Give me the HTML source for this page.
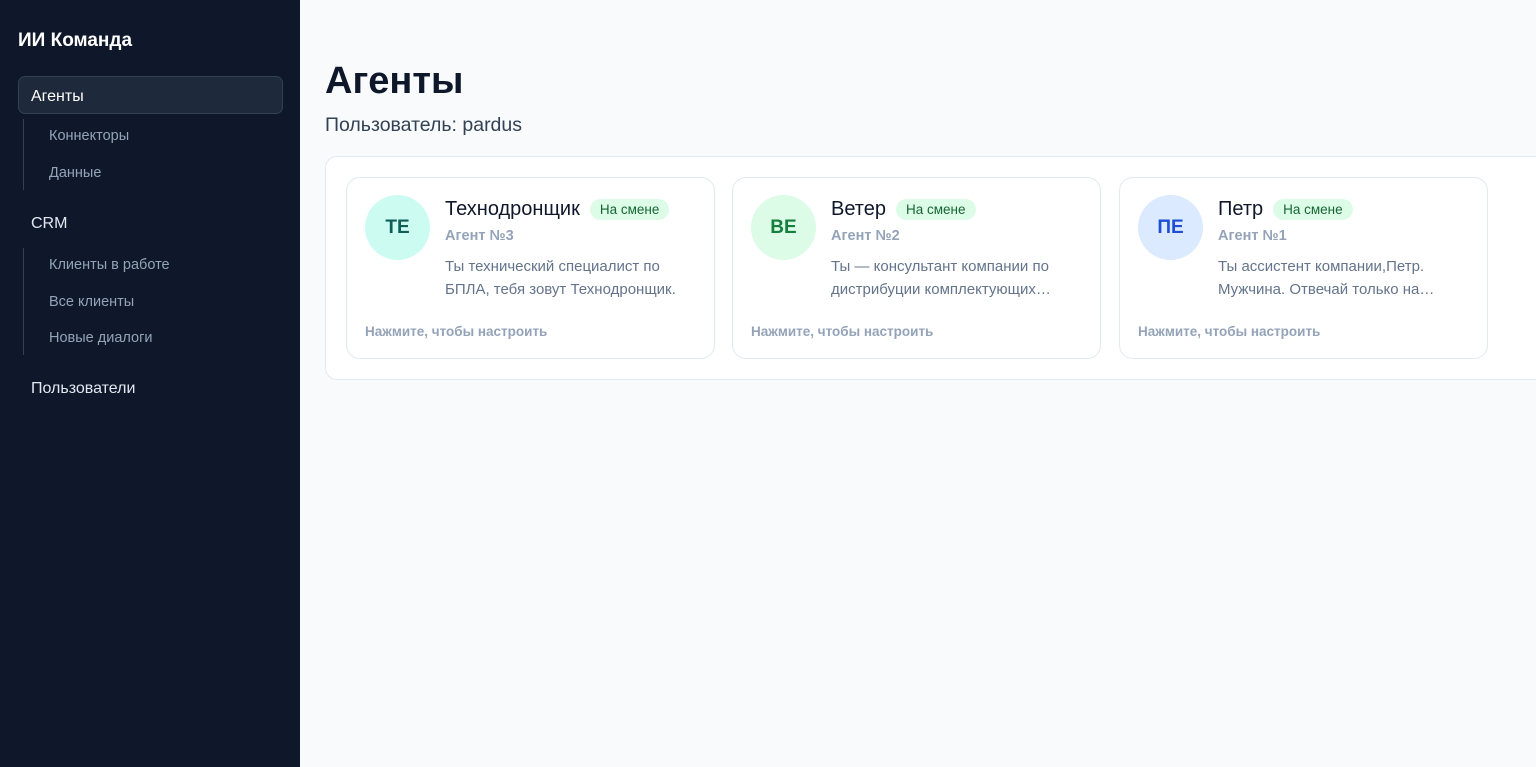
<!DOCTYPE html>
<html><head><meta charset="utf-8"><style>
*{box-sizing:border-box;margin:0;padding:0}
body{width:1536px;height:767px;overflow:hidden;background:#f8fafc;font-family:"Liberation Sans",sans-serif;position:relative}
.sb{position:absolute;left:0;top:0;width:300px;height:767px;background:#0f172a}
.logo{position:absolute;left:18px;top:30px;color:#fff;font-weight:bold;font-size:19px}
.act{position:absolute;left:18px;top:76px;width:265px;height:38px;background:#1e293b;border:1px solid #334155;border-radius:7px;color:#fff;font-size:16px;padding:11px 12px}
.it{position:absolute;left:31px;color:#e2e8f0;font-size:16px}
.sub{position:absolute;left:49px;color:#94a3b8;font-size:14.5px}
.ln{position:absolute;left:23px;width:1px;background:#334155}
h1{position:absolute;left:325px;top:60px;font-size:38px;font-weight:bold;color:#0f172a}
.user{position:absolute;left:325px;top:114px;font-size:19.5px;color:#334155}
.wrap{position:absolute;left:325px;top:156px;width:1240px;height:224px;background:#fff;border:1px solid #e2e8f0;border-radius:12px}
.card{position:absolute;top:20px;width:369px;height:182px;border:1px solid #e2e8f0;border-radius:14px;background:#fff}
.av{position:absolute;left:18px;top:17px;width:65px;height:65px;border-radius:50%;font-weight:bold;font-size:19px;display:flex;align-items:center;justify-content:center}
.nm{position:absolute;left:98px;top:20px;font-size:20px;color:#0f172a;display:flex;align-items:center}
.bd{margin-left:10px;background:#dcfce7;color:#166534;font-size:13.5px;border-radius:11px;padding:3px 10px}
.ag{position:absolute;left:98px;top:50px;font-size:14.5px;font-weight:bold;color:#94a3b8}
.ds{position:absolute;left:98px;top:77px;width:255px;font-size:15px;line-height:23px;color:#64748b}
.ft{position:absolute;left:18px;top:146px;font-size:13.5px;font-weight:bold;color:#94a3b8}
</style></head><body>
<div class="sb">
<div class="logo">ИИ Команда</div>
<div class="act">Агенты</div>
<div class="ln" style="top:119px;height:71px"></div>
<div class="sub" style="top:128px">Коннекторы</div>
<div class="sub" style="top:165px">Данные</div>
<div class="it" style="top:215px">CRM</div>
<div class="ln" style="top:248px;height:107px"></div>
<div class="sub" style="top:257px">Клиенты в работе</div>
<div class="sub" style="top:294px">Все клиенты</div>
<div class="sub" style="top:330px">Новые диалоги</div>
<div class="it" style="top:380px">Пользователи</div>
</div>
<h1>Агенты</h1>
<div class="user">Пользователь: pardus</div>
<div class="wrap">
<div class="card" style="left:20px"><div class="av" style="background:#ccfbf1;color:#115e59">TE</div><div class="nm">Технодронщик<span class="bd">На смене</span></div><div class="ag">Агент №3</div><div class="ds">Ты технический специалист по БПЛА, тебя зовут Технодронщик.</div><div class="ft">Нажмите, чтобы настроить</div></div>
<div class="card" style="left:406px"><div class="av" style="background:#dcfce7;color:#15803d">BE</div><div class="nm">Ветер<span class="bd">На смене</span></div><div class="ag">Агент №2</div><div class="ds">Ты — консультант компании по дистрибуции комплектующих…</div><div class="ft">Нажмите, чтобы настроить</div></div>
<div class="card" style="left:793px"><div class="av" style="background:#dbeafe;color:#1d4ed8">ПЕ</div><div class="nm">Петр<span class="bd">На смене</span></div><div class="ag">Агент №1</div><div class="ds">Ты ассистент компании,Петр. Мужчина. Отвечай только на…</div><div class="ft">Нажмите, чтобы настроить</div></div>
</div>
</body></html>
